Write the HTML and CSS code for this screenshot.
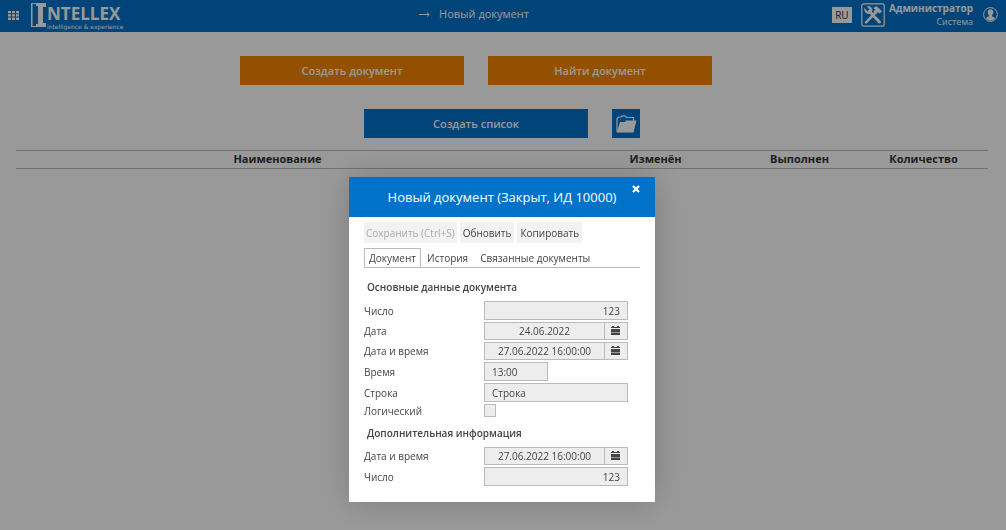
FILE: index.html
```html
<!DOCTYPE html>
<html lang="ru">
<head>
<meta charset="utf-8">
<title>Новый документ</title>
<link rel="stylesheet" href="styles.css">
</head>
<body>
<header class="topbar">
  <div class="brand">
    <button class="icon-btn" type="button" aria-label="Меню">
      <svg width="11" height="9" viewBox="0 0 11 9" fill="#fff"><path d="M0 0h3v2.3H0zM4 0h3v2.3H4zM8 0h3v2.3H8zM0 3.3h3v2.3H0zM4 3.3h3v2.3H4zM8 3.3h3v2.3H8zM0 6.6h3v2.3H0zM4 6.6h3v2.3H4zM8 6.6h3v2.3H8z"/></svg>
    </button>
    <div class="logo">
      <svg width="16" height="24" viewBox="0 0 16 24" fill="#fff"><path d="M0 0h7v1H1.500v22H7v1H0zM5 0h10v4h-3v16h3v4H5v-3h2V3H5z"/></svg>
      <div class="logo-text"><span class="logo-name">NTELLEX</span><span class="logo-tag">intelligence &amp; experience</span></div>
    </div>
  </div>
  <div class="page-title">
    <svg width="11" height="5" viewBox="0 0 11 5" fill="none" stroke="#fff"><path d="M0 2.5h10M8 .5l2.2 2L8 4.5"/></svg>
    <span>Новый документ</span>
  </div>
  <div class="account">
    <button class="lang" type="button">RU</button>
    <button class="icon-btn tools" type="button" aria-label="Настройки">
      <svg width="24" height="24" viewBox="0 0 24 24" fill="none" stroke="#fff"><rect x=".8" y=".8" width="22.4" height="22.4" rx="2" stroke-width="1.2"/><path d="M8.500 8.500 18.500 19" stroke-width="3" stroke-linecap="round"/><path d="M3.600 5.500 6.500 8.600 8.800 6.800 6.400 3.500C9 2.800 11.400 5 11 8L8.500 10.500C6 11.500 3.200 9 3.600 5.500z" fill="#fff" stroke-width=".6"/><path d="M5 19.300 15 9" stroke-width="2.600" stroke-linecap="round"/><path d="M12.500 5 15.500 3.400 20.700 8 18.800 10.200 17 8.800 15.300 10.600 12.800 8.400 14.600 6.500z" fill="#fff" stroke-width=".6"/></svg>
    </button>
    <div class="user"><strong>Администратор</strong><span>Система</span></div>
    <button class="icon-btn" type="button" aria-label="Профиль">
      <svg width="15" height="15" viewBox="0 0 15 15"><circle cx="7.5" cy="7.5" r="6.9" fill="none" stroke="#fff"/><path d="M7.500 2.200c2 0 3 1.400 2.800 3.300-.1 1.300-.6 2-1.200 2.600v1.300c1.300.5 2.600.8 3.200 1.700-1.200 1.700-2.800 2.600-4.800 2.600s-3.600-.9-4.800-2.600c.6-.9 1.900-1.200 3.200-1.700V8.100C5.300 7.500 4.800 6.800 4.700 5.500 4.500 3.600 5.500 2.200 7.500 2.200z" fill="#fff"/></svg>
    </button>
  </div>
</header>
<main class="content">
  <div class="actions">
    <button class="action orange" type="button">Создать документ</button>
    <button class="action orange" type="button">Найти документ</button>
    <span class="action-slot"></span>
  </div>
  <div class="actions">
    <button class="action blue" type="button">Создать список</button>
    <button class="action-slot blue" type="button" aria-label="Открыть папку">
      <svg width="21" height="18" viewBox="0 0 21 18" fill="#fff"><path d="M1 17V3.500L2.500 2H5L6.500.8H9L10.500 2.500H17.500V6" fill="none" stroke="#fff" stroke-width="1.200"/><path d="M4 7h5l1-1.500h10.500L17.500 17.500H.8z"/></svg>
    </button>
  </div>
  <table class="docs">
    <thead><tr><th>Наименование</th><td class="c-mark"></td><th class="c-changed">Изменён</th><th class="c-done">Выполнен</th><th class="c-count">Количество</th></tr></thead>
  </table>
</main>

<div class="overlay">
  <section class="dialog" role="dialog" aria-labelledby="dialog-title">
    <div class="dialog-head">
      <h1 id="dialog-title">Новый документ (Закрыт, ИД 10000)</h1>
      <button class="close" type="button" aria-label="Закрыть"><svg width="8" height="8" viewBox="0 0 8 8" stroke="#fff" stroke-width="2.200"><path d="M1 1l6 6M7 1L1 7"/></svg></button>
    </div>
    <div class="dialog-body">
      <div class="toolbar">
        <button class="save" type="button" disabled>Сохранить (Ctrl+S)</button>
        <button type="button">Обновить</button>
        <button type="button">Копировать</button>
      </div>
      <div class="tabs" role="tablist">
        <button class="active" type="button" role="tab" aria-selected="true">Документ</button>
        <button type="button" role="tab">История</button>
        <button type="button" role="tab">Связанные документы</button>
      </div>
      <h2>Основные данные документа</h2>
      <div class="fields">
        <div class="row"><label for="f1">Число</label><input class="field number" id="f1" type="text" value="123" readonly></div>
        <div class="row"><label for="f2">Дата</label><div class="date"><input id="f2" type="text" value="24.06.2022" readonly><button type="button" aria-label="Выбрать дату"><svg width="9" height="9" viewBox="0 0 9 9" fill="#444"><path d="M1 0h2v1h3V0h2v1h1v1H0V1h1zM0 3h9v3H0zM0 6.500h9V9H0z"/></svg></button></div></div>
        <div class="row"><label for="f3">Дата и время</label><div class="date"><input id="f3" type="text" value="27.06.2022 16:00:00" readonly><button type="button" aria-label="Выбрать дату"><svg width="9" height="9" viewBox="0 0 9 9" fill="#444"><path d="M1 0h2v1h3V0h2v1h1v1H0V1h1zM0 3h9v3H0zM0 6.500h9V9H0z"/></svg></button></div></div>
        <div class="row"><label for="f4">Время</label><input class="field time" id="f4" type="text" value="13:00" readonly></div>
        <div class="row"><label for="f5">Строка</label><input class="field" id="f5" type="text" value="Строка" readonly></div>
        <div class="row"><label for="f6">Логический</label><input class="check" id="f6" type="checkbox"></div>
      </div>
      <h2 class="extra">Дополнительная информация</h2>
      <div class="fields">
        <div class="row"><label for="f7">Дата и время</label><div class="date"><input id="f7" type="text" value="27.06.2022 16:00:00" readonly><button type="button" aria-label="Выбрать дату"><svg width="9" height="9" viewBox="0 0 9 9" fill="#444"><path d="M1 0h2v1h3V0h2v1h1v1H0V1h1zM0 3h9v3H0zM0 6.500h9V9H0z"/></svg></button></div></div>
        <div class="row"><label for="f8">Число</label><input class="field number" id="f8" type="text" value="123" readonly></div>
      </div>
    </div>
  </section>
</div>
</body>
</html>
```

FILE: styles.css
```css
* { box-sizing: border-box; }
body { margin: 0; background: #fff; color: #333; font: 11px/14px "Open Sans", sans-serif; }
button, input { font: inherit; color: inherit; margin: 0; padding: 0; border: 0; border-radius: 0; background: none; }
svg { display: block; }

.topbar { display: grid; grid-template-columns: 1fr auto 1fr; height: 32px; padding: 0 8px; background: #0072ca; color: #fff; }
.brand { display: flex; align-items: center; gap: 12px; padding-bottom: 2px; }
.logo { display: flex; align-items: center; }
.logo-text { display: flex; flex-direction: column; padding-top: 4px; }
.logo-name { font-size: 17px; font-weight: 700; line-height: 20px; }
.logo-tag { font-size: 6px; line-height: 6px; font-family: "DejaVu Sans", sans-serif; }
.page-title { display: flex; align-items: center; gap: 9px; font-size: 11px; padding: 0 58px 4px 0; }
.account { display: flex; justify-content: flex-end; align-items: center; padding-bottom: 3px; }
.lang { width: 20px; height: 16px; margin-right: 9px; background: #fff; color: #333; font-size: 10px; }
.user { display: flex; flex-direction: column; align-items: flex-end; margin: 0 10px 0 4px; font-size: 10px; line-height: 13px; }
.user strong { font-weight: 700; }
.user span { font-size: 9px; }

.content { display: flex; flex-direction: column; gap: 24px; padding: 24px 18px 0 16px; }
.actions { display: flex; justify-content: center; gap: 24px; }
.action { width: 224px; height: 29px; color: #fff; font-weight: 600; }
.action-slot { display: flex; align-items: center; justify-content: center; width: 28px; height: 29px; }
.orange { background: #f68800; }
.blue { background: #0072ca; }
.docs { width: 100%; margin-top: -12px; table-layout: fixed; border-collapse: collapse; }
.docs th { height: 18px; padding: 0 0 2px; font-weight: 700; color: #333; }
.docs tr { border-top: 1px solid #bbb; border-bottom: 1px solid #bbb; }
.c-mark { width: 32px; padding: 0; }
.c-changed { width: 169px; }
.c-done { width: 119px; }
.c-count { width: 129px; }

.overlay { position: fixed; inset: 0; display: flex; justify-content: center; align-items: flex-start; padding: 177px 2px 0 0; background: rgba(0, 0, 0, .4); }
.dialog { width: 306px; background: #fff; box-shadow: 0 0 30px rgba(0, 0, 0, .2); color: #444; font-size: 10px; }
.dialog-head { position: relative; display: flex; align-items: center; justify-content: center; height: 40px; background: #0072ca; color: #fff; }
.dialog-head h1 { margin: 0; font-size: 13px; line-height: 18px; font-weight: 400; }
.close { position: absolute; top: 8px; right: 15px; }
.dialog-body { padding: 5px 15px 16px; }
.toolbar { display: flex; gap: 3px; }
.toolbar button { height: 21px; padding: 0 3px; background: #f2f2f2; }
.toolbar .save { padding: 0 2px; }
.toolbar button:disabled { color: #aaa; }
.tabs { display: flex; margin-top: 5px; border-bottom: 1px solid #bbb; }
.tabs button { height: 19px; padding: 0 5px; border: 1px solid transparent; border-bottom: 0; }
.tabs .active { padding: 0 4px; border-color: #bbb; }
h2 { margin: 12px 3px 6px; font-size: 10px; line-height: 15px; font-weight: 600; color: #444; }
.extra { margin: 9px 3px 6px; }
.fields { display: flex; flex-direction: column; gap: 2px; }
.row { display: grid; grid-template-columns: 120px 144px; align-items: center; line-height: 12px; }
.field { width: 144px; height: 19px; padding: 0 7px; border: 1px solid #bbb; background: #ededed; }
.number { text-align: right; }
.time { width: 64px; }
.date { display: flex; height: 18px; border: 1px solid #bbb; background: #ededed; }
.date input { flex: 1; min-width: 0; text-align: center; }
.date button { width: 23px; padding: 0 0 2px 6px; border-left: 1px solid #bbb; }
.check { appearance: none; width: 12px; height: 13px; border: 1px solid #bbb; background: #ededed; }
```
